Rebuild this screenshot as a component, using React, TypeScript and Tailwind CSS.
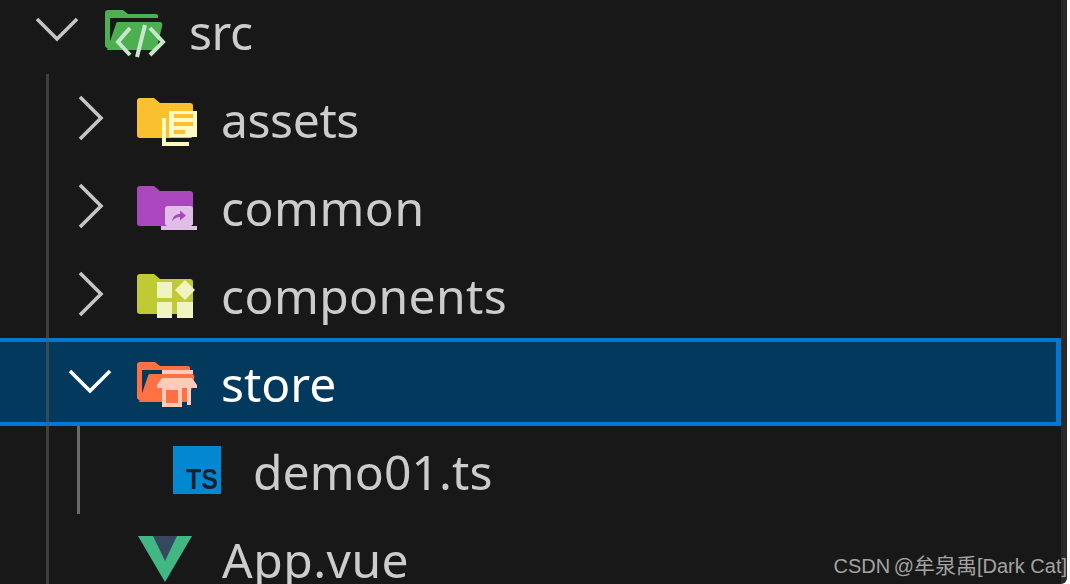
const Chevron = ({ dir, white }: { dir: "down" | "right"; white?: boolean }) => (
  <svg width="48" height="48" viewBox="0 0 48 48" fill="none" className="shrink-0">
    <path
      d={dir === "down" ? "M4 13L24 33L44 13" : "M14 3L35 24L14 45"}
      stroke={white ? "#ffffff" : "#c5c5c5"}
      strokeWidth="3.6"
    />
  </svg>
);

const Icon = ({ children }: { children: React.ReactNode }) => (
  <svg width="64" height="64" viewBox="0 0 64 64" className="shrink-0">
    {children}
  </svg>
);

const closedFolder = "M4 12H18L24 17H54a3 3 0 0 1 3 3V49a3 3 0 0 1-3 3H4a3 3 0 0 1-3-3V15a3 3 0 0 1 3-3z";
const openBack = "M4 12H19L24 16H52a2 2 0 0 1 2 2V20H6V50H4a3 3 0 0 1-3-3V15a3 3 0 0 1 3-3z";
const openFront = "M14 24H56a2.5 2.5 0 0 1 2.4 3L53 49a3 3 0 0 1-3 3H3L12 26a2 2 0 0 1 2-2z";

const SrcIcon = () => (
  <Icon>
    <path d={openBack} fill="#4caf50" />
    <path d={openFront} fill="#4caf50" />
    <path d="M26 30L14 44L26 57M46 30L59 44L46 57M41 27L33 59" fill="none" stroke="#c8e6c9" strokeWidth="4" />
  </Icon>
);

const AssetsIcon = () => (
  <Icon>
    <path d={closedFolder} fill="#fbc02d" />
    <rect x="33" y="25" width="28" height="26" fill="#fff9c4" />
    <rect x="38" y="28" width="19" height="4" fill="#fbc02d" />
    <rect x="38" y="36" width="19" height="4" fill="#fbc02d" />
    <rect x="38" y="44" width="11" height="4" fill="#fbc02d" />
    <path d="M28 32V58H53" fill="none" stroke="#fff9c4" strokeWidth="4" />
  </Icon>
);

const CommonIcon = () => (
  <Icon>
    <path d={closedFolder} fill="#ab47bc" />
    <rect x="29" y="32" width="28" height="20" rx="3" fill="#e1bee7" />
    <rect x="25" y="52" width="36" height="4" fill="#e1bee7" />
    <path d="M36 47C37 42 40 40 44 40V36.5L50 41.5L44 46.5V43C41 43 38.5 44.5 36 47z" fill="#ab47bc" />
  </Icon>
);

const ComponentsIcon = () => (
  <Icon>
    <path d={closedFolder} fill="#c0ca33" />
    <rect x="21" y="20" width="15" height="16" fill="#f0f4c3" />
    <rect x="21" y="40" width="15" height="16" fill="#f0f4c3" />
    <rect x="41" y="40" width="16" height="16" fill="#f0f4c3" />
    <path d="M49 18L59 28L49 38L39 28z" fill="#f0f4c3" />
  </Icon>
);

const StoreIcon = () => (
  <Icon>
    <path d={openBack} fill="#ff7043" />
    <path d={openFront} fill="#ff7043" />
    <rect x="26" y="20" width="31" height="4" fill="#ffccbc" />
    <path d="M26 28H56L61 35V38H21V35z" fill="#ffccbc" />
    <rect x="28" y="38" width="16" height="17" fill="#ff7043" stroke="#ffccbc" strokeWidth="4" />
    <rect x="51" y="38" width="4" height="17" fill="#ffccbc" />
  </Icon>
);

const TsIcon = () => (
  <Icon>
    <rect x="5" y="8" width="48" height="48" fill="#0288d1" />
    <text
      x="18"
      y="51"
      fill="#17212b"
      fontSize="29"
      fontWeight="700"
      textLength="32"
      lengthAdjust="spacingAndGlyphs"
      fontFamily="'Liberation Sans', sans-serif"
    >
      TS
    </text>
  </Icon>
);

const VueIcon = () => (
  <Icon>
    <path d="M2 10H56L29 56z" fill="#41b883" />
    <path d="M17 10H41L29 35z" fill="#35495e" />
  </Icon>
);

const labelBase =
  "text-[48px] leading-[64px] whitespace-nowrap font-['Noto_Sans','Open_Sans',sans-serif] translate-y-[2px]";

const Label = ({ children, white, track }: { children: React.ReactNode; white?: boolean; track?: string }) => (
  <span className={`${labelBase} ${track ?? ""} ${white ? "text-white" : "text-[#cccccc]"}`}>{children}</span>
);

export default function App() {
  return (
    <div className="w-[1070px] h-[584px] bg-white overflow-hidden">
      <div className="relative w-[1067px] h-[584px] flex bg-[#2a2a2a] rounded-br-[6px] overflow-hidden">
        <div className="w-[1061px] h-[584px] bg-[#181818] shrink-0 overflow-hidden blur-[0.7px]">
          <div className="relative -mt-[14px] flex flex-col">
            <div className="h-[88px] flex items-center pl-[33px]">
              <Chevron dir="down" />
              <div className="ml-[23px] mr-[21px] flex"><SrcIcon /></div>
              <Label track="tracking-[-0.4px]">src</Label>
            </div>
            <div className="h-[88px] flex items-center pl-[66px]">
              <Chevron dir="right" />
              <div className="ml-[22px] mr-[21px] flex"><AssetsIcon /></div>
              <Label track="tracking-[-0.4px]">assets</Label>
            </div>
            <div className="h-[88px] flex items-center pl-[66px]">
              <Chevron dir="right" />
              <div className="ml-[22px] mr-[21px] flex"><CommonIcon /></div>
              <Label track="tracking-[0.5px]">common</Label>
            </div>
            <div className="h-[88px] flex items-center pl-[66px]">
              <Chevron dir="right" />
              <div className="ml-[22px] mr-[21px] flex"><ComponentsIcon /></div>
              <Label track="tracking-[0.4px]">components</Label>
            </div>
            <div className="h-[88px] flex items-center pl-[66px] bg-[#04395e] border-y-[4px] border-r-[5px] border-[#0078d4]">
              <Chevron dir="down" white />
              <div className="ml-[22px] mr-[21px] flex"><StoreIcon /></div>
              <Label white>store</Label>
            </div>
            <div className="h-[88px] flex items-center pl-[168px]">
              <div className="mr-[21px] flex"><TsIcon /></div>
              <Label track="tracking-[0.1px]">demo01.ts</Label>
            </div>
            <div className="h-[88px] flex items-center pl-[136px]">
              <div className="mr-[22px] flex"><VueIcon /></div>
              <Label track="tracking-[0.5px]">App.vue</Label>
            </div>
            <div className="absolute left-[46px] top-[88px] w-[3px] h-[510px] bg-[#585858]/60" />
            <div className="absolute left-[77px] top-[440px] w-[3px] h-[88px] bg-[#6a6a6a]" />
          </div>
        </div>
        <span className="absolute right-0 bottom-[6px] text-[20px] leading-[24px] whitespace-nowrap text-[#a3a3a3] font-['Liberation_Sans','Noto_Sans_CJK_SC',sans-serif]">
          <span className="[word-spacing:-2px]">CSDN @</span><span className="text-[21px]">牟泉禹</span>[Dark Cat]
        </span>
      </div>
    </div>
  );
}
